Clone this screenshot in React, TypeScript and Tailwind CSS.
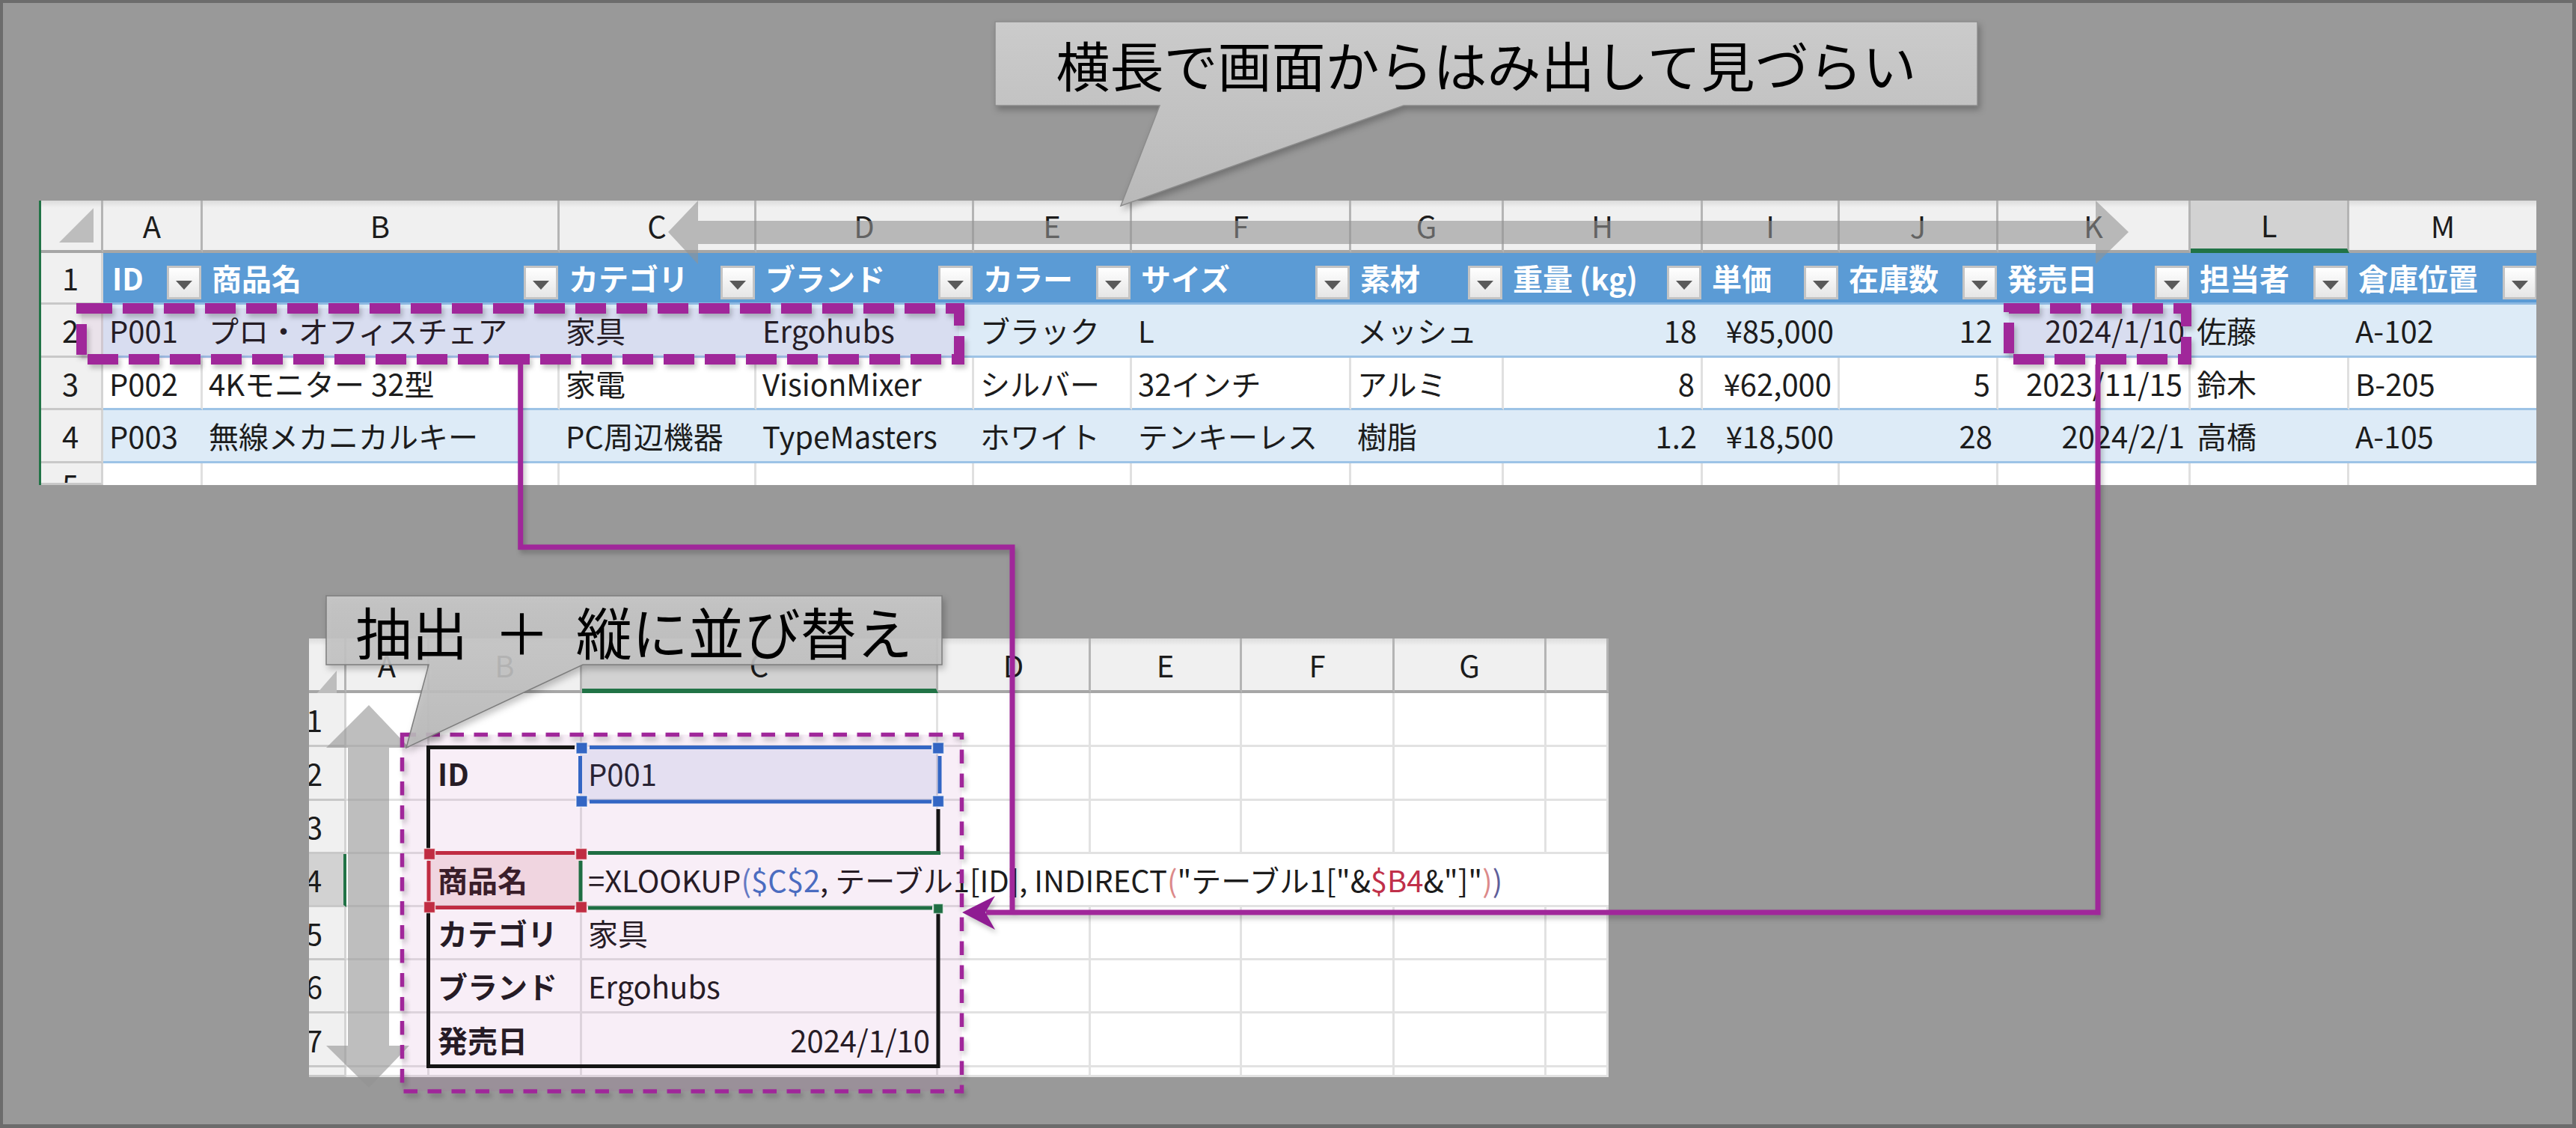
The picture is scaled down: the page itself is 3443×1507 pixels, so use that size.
const topHeaders = ["ID", "商品名", "カテゴリ", "ブランド", "カラー", "サイズ", "素材", "重量 (kg)", "単価", "在庫数", "発売日", "担当者", "倉庫位置"]
const topLetters = ["A", "B", "C", "D", "E", "F", "G", "H", "I", "J", "K", "L", "M"]
const topRows = [
  ["P001", "プロ・オフィスチェア", "家具", "Ergohubs", "ブラック", "L", "メッシュ", "18", "¥85,000", "12", "2024/1/10", "佐藤", "A-102"],
  ["P002", "4Kモニター 32型", "家電", "VisionMixer", "シルバー", "32インチ", "アルミ", "8", "¥62,000", "5", "2023/11/15", "鈴木", "B-205"],
  ["P003", "無線メカニカルキー", "PC周辺機器", "TypeMasters", "ホワイト", "テンキーレス", "樹脂", "1.2", "¥18,500", "28", "2024/2/1", "高橋", "A-105"],
]
const rightAligned = [7, 8, 9, 10]

const PURPLE = "#a0279a"
const BLUE = "#3366c4"
const RED = "#c02c42"
const GREEN = "#1f6e43"
const BLACK = "#151515"

const colHead =
  "flex items-center justify-center border-r-[3px] border-b-[4px] border-r-[#b4b4b4] border-b-[#a6a6a6] bg-linear-to-b from-[#dcdcdc] to-[#f0f0f0] to-[14%]"
const rowHead = "flex items-center justify-end overflow-hidden border-r-[3px] border-b-[3px] border-r-[#d4d4d4] border-b-[#c8c8c8] bg-[#f0f0f0]"

function FilterButton() {
  return (
    <span className="mr-[2px] mb-[4px] ml-auto flex h-[45px] w-[46px] shrink-0 items-center justify-center self-end border-[3px] border-[#c4c4c4] bg-linear-to-b from-white to-[#e6e6e6] pt-[6px]">
      <svg width="22" height="12" viewBox="0 0 22 12">
        <polygon points="0,0 22,0 11,12" fill="#5a5a5a" />
      </svg>
    </span>
  )
}

function CornerMark({ width }: { width: number }) {
  return (
    <svg width={width} height="46" viewBox={`0 0 ${width} 46`} className="shrink-0">
      <polygon points={`0,46 ${width},46 ${width},0`} fill="#bdbdbd" />
    </svg>
  )
}

function TopSheet() {
  return (
    <div className="mt-[264px] ml-[48px] grid w-[3338px] grid-cols-[83px_133px_477px_263px_291px_211px_293px_204px_266px_183px_212px_257px_212px_253px] grid-rows-[70px_69px_71px_70px_71px_29px] overflow-hidden border-l-[3px] border-[#217346] bg-white text-[40px] leading-none text-[#1c1c1c]">
      <div className={`${colHead} items-end pr-[10px] pb-[10px] !justify-end`}>
        <CornerMark width={46} />
      </div>
      {topLetters.map((l) => (
        <div
          key={l}
          className={
            l === "L"
              ? "flex items-center justify-center border-r-[3px] border-b-[6px] border-r-[#b4b4b4] border-b-[#217346] bg-[#d2d2d2]"
              : colHead
          }
        >
          {l}
        </div>
      ))}

      <div className={rowHead}>
        <span className="w-[82px] shrink-0 text-center">1</span>
      </div>
      {topHeaders.map((h) => (
        <div key={h} className="flex items-center border-b-[3px] border-b-[#8db9e2] bg-[#5b9bd5] pl-[12px] font-bold whitespace-nowrap text-white">
          {h}
          <FilterButton />
        </div>
      ))}

      {topRows.map((row, r) => (
        <div key={row[0]} className="contents">
          <div className={rowHead}>
            <span className="w-[82px] shrink-0 text-center">{r + 2}</span>
          </div>
          {row.map((cell, c) => (
            <div
              key={c}
              className={`flex items-center border-b-[3px] border-b-[#9dc3e6] px-[8px] whitespace-nowrap ${
                rightAligned.includes(c) ? "justify-end" : ""
              } ${r === 1 ? "border-r-[3px] border-r-[#e0e0e0] bg-white" : "bg-[#ddebf7]"}`}
            >
              {cell}
            </div>
          ))}
        </div>
      ))}

      <div className={`${rowHead} !items-start`}>
        <span className="w-[82px] shrink-0 pt-[8px] text-center">5</span>
      </div>
      {topLetters.map((l) => (
        <div key={l} className="border-r-[3px] border-[#e0e0e0]" />
      ))}
    </div>
  )
}

const gridCell = "border-r-[3px] border-b-[3px] border-[#e2e2e2] bg-white"

function BottomSheet() {
  const values: Record<number, [string, string]> = {
    2: ["ID", "P001"],
    5: ["カテゴリ", "家具"],
    6: ["ブランド", "Ergohubs"],
    7: ["発売日", "2024/1/10"],
  }
  const rows = [1, 2, 3, 4, 5, 6, 7, 8]

  return (
    <div className="mt-[205px] ml-[409px] grid w-[1737px] grid-cols-[50px_111px_204px_476px_204px_202px_204px_203px_83px] grid-rows-[73px_72px_72px_71px_71px_71px_71px_72px_13px] overflow-hidden bg-white text-[40px] leading-none text-[#1c1c1c]">
      <div className={`${colHead} !items-start !justify-end pt-[43px] pr-[10px]`}>
        <CornerMark width={40} />
      </div>
      {["A", "B", "C", "D", "E", "F", "G", ""].map((l, i) => (
        <div
          key={i}
          className={
            l === "C"
              ? "flex items-center justify-center border-r-[3px] border-b-[6px] border-r-[#b4b4b4] border-b-[#217346] bg-[#d2d2d2]"
              : colHead
          }
        >
          {l}
        </div>
      ))}

      {rows.map((n) => (
        <div key={n} className="contents">
          <div
            className={
              n === 4
                ? "flex items-center justify-end overflow-hidden border-r-[4px] border-b-[3px] border-r-[#217346] border-b-[#c8c8c8] bg-[#d2d2d2]"
                : rowHead
            }
          >
            <span className="w-[80px] shrink-0 text-center">{n < 8 ? n : ""}</span>
          </div>
          <div className={gridCell} />
          {n === 4 ? (
            <>
              <div className={`${gridCell} flex items-center pl-[11px] font-bold whitespace-nowrap`}>商品名</div>
              <div className="col-span-6 flex items-center border-b-[3px] border-[#e2e2e2] bg-white pl-[8px] whitespace-nowrap">
                =XLOOKUP<span className="text-[#5f82c8]">(</span>
                <span className="text-[#4472c4]">$C$2</span>, テーブル1[ID], INDIRECT
                <span className="text-[#dc8a8a]">(</span> "テーブル1["&amp;
                <span className="text-[#c0304a]">$B4</span>&amp;"]" <span className="text-[#dc8a8a]">)</span>
                <span className="text-[#5f5f9a]">)</span>
              </div>
            </>
          ) : (
            <>
              <div className={`${gridCell} flex items-center pl-[11px] font-bold whitespace-nowrap`}>{values[n]?.[0]}</div>
              <div className={`${gridCell} flex items-center px-[8px] whitespace-nowrap ${n === 7 ? "justify-end" : ""}`}>{values[n]?.[1]}</div>
              {[0, 1, 2, 3, 4].map((i) => (
                <div key={i} className={gridCell} />
              ))}
            </>
          )}
        </div>
      ))}
    </div>
  )
}

function Handle({ x, y, color, size = 15 }: { x: number; y: number; color: string; size?: number }) {
  return <rect x={x - size / 2} y={y - size / 2} width={size} height={size} fill={color} stroke="#ffffff" strokeOpacity="0.6" strokeWidth="1.5" />
}

function Annotations() {
  return (
    <>
      <svg className="absolute top-0 left-0" width="3443" height="1507" viewBox="0 0 3443 1507" fill="none">
        <defs>
          <linearGradient id="bubbleFill" x1="0" y1="0" x2="0" y2="1">
            <stop offset="0" stopColor="#cbcbcb" />
            <stop offset="1" stopColor="#b9b9b9" />
          </linearGradient>
        </defs>

        {/* range highlights on the lookup block */}
        <rect x="778" y="1000" width="476" height="72" fill={BLUE} fillOpacity="0.1" />
        <rect x="575" y="1141" width="202" height="71" fill={RED} fillOpacity="0.13" />
        <rect x="537.5" y="981.5" width="748" height="476.5" fill={PURPLE} fillOpacity="0.08" />

        {/* black table outline */}
        <path d="M768,998.5 H572.5 V1134 M572.5,1218 V1424.5 H1254 V1220 M1254,1081 V1137" stroke={BLACK} strokeWidth="5" />

        {/* blue, red and green reference boxes */}
        <path d="M788,998.5 H1245 M788,1071 H1245 M775.5,1010 V1060 M1256,1010 V1060" stroke={BLUE} strokeWidth="5" />
        <Handle x={777.5} y={999.5} color={BLUE} />
        <Handle x={1254} y={999.5} color={BLUE} />
        <Handle x={777.5} y={1070.5} color={BLUE} />
        <Handle x={1254} y={1070.5} color={BLUE} />
        <path d="M582,1139.5 H768 M582,1212.5 H768 M573,1150 V1205" stroke={RED} strokeWidth="5" />
        <path d="M786,1139.5 H1257 M786,1213 H1246 M776,1150 V1205" stroke={GREEN} strokeWidth="5" />
        <Handle x={574} y={1141} color={RED} />
        <Handle x={777} y={1141} color={RED} />
        <Handle x={574} y={1212} color={RED} />
        <Handle x={777} y={1212} color={RED} />
        <Handle x={1254} y={1214} color={GREEN} size={13} />

        {/* grey scroll arrows */}
        <path d="M893,310 L933,268 V295 H2801 V268 L2845,310 L2801,353 V326 H933 V353 Z" fill="#939393" fillOpacity="0.6" />
        <path d="M493,942 L547,999 H520 V1397 H547 L493,1453 L436,1397 H465 V999 H436 Z" fill="#939393" fillOpacity="0.6" />

        {/* selected cells in the wide table */}
        <rect x="109" y="412" width="1173" height="68" fill={PURPLE} fillOpacity="0.07" />
        <rect x="2685" y="412" width="237" height="68" fill={PURPLE} fillOpacity="0.07" />
        <g className="drop-shadow-[3px_5px_3px_rgba(0,0,0,0.22)]">
          <rect x="109" y="412" width="1173" height="68" stroke={PURPLE} strokeWidth="14" strokeDasharray="41 14" />
          <rect x="2685" y="412" width="237" height="68" stroke={PURPLE} strokeWidth="14" strokeDasharray="41 14" />
          <rect x="537.5" y="981.5" width="748" height="476.5" stroke={PURPLE} strokeWidth="5.5" strokeDasharray="18.5 13.5" />
          <path d="M695.7,487 V731 H1353 V1219 M2804,487 V1219 H1318" stroke={PURPLE} strokeWidth="7" />
          <polygon points="1286,1219 1330,1197 1317,1219 1330,1242" fill="#8f1c92" />
        </g>

        {/* callouts */}
        <path
          className="drop-shadow-[3px_5px_4px_rgba(0,0,0,0.25)]"
          d="M1330,29 H2643 V141 H1876 L1498,275 L1550,141 H1330 Z"
          fill="url(#bubbleFill)"
          stroke="#8c8c8c"
          strokeWidth="1.5"
        />
        <path
          className="drop-shadow-[3px_5px_4px_rgba(0,0,0,0.25)]"
          d="M436,796 H1259 V888 H779 L543,999 L573,888 H436 Z"
          fill="url(#bubbleFill)"
          fillOpacity="0.9"
          stroke="#7d7d7d"
          strokeWidth="1.5"
        />
      </svg>

      <div className="absolute top-[29px] left-[1330px] flex h-[112px] w-[1313px] items-center justify-center text-[72px] leading-none whitespace-nowrap text-black">
        横長で画面からはみ出して見づらい
      </div>
      <div className="absolute top-[796px] left-[436px] flex h-[92px] w-[823px] items-center justify-center text-[75px] leading-none whitespace-pre text-black [word-spacing:18px]">
        抽出 ＋ 縦に並び替え
      </div>
    </>
  )
}

export default function App() {
  return (
    <div className="relative box-border h-[1507px] w-[3443px] overflow-hidden border-t-[4px] border-r-[5px] border-b-[5px] border-l-[4px] border-[#6c6c6c] bg-[#999999] font-['Noto_Sans_CJK_JP','Noto_Sans',sans-serif]">
      <TopSheet />
      <BottomSheet />
      <div className="absolute -top-[4px] -left-[4px]">
        <Annotations />
      </div>
    </div>
  )
}
